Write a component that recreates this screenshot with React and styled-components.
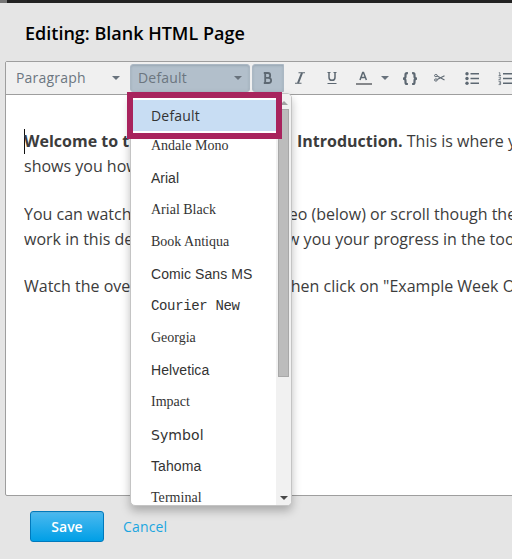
import React from 'react';
import styled, { createGlobalStyle, css } from 'styled-components';

const Global = createGlobalStyle`
  * { box-sizing: border-box; }
  body { margin: 0; background: #e5e5e5; font-family: "Open Sans", sans-serif; color: #3c3c3c; overflow: hidden; }
`;

const Page = styled.main`
  width: 512px;
  height: 559px;
  overflow: hidden;
  position: relative;
  display: flex;
  flex-direction: column;
`;

const TopBar = styled.div`
  height: 3px;
  flex: none;
  background: linear-gradient(90deg, #777 7px, #222 7px);
`;

const Title = styled.h1`
  margin: 0;
  height: 58px;
  flex: none;
  padding: 3px 0 0 25px;
  font-size: 18px;
  line-height: 54px;
  font-weight: 600;
  color: #000;
  white-space: nowrap;
`;

const Editor = styled.section`
  width: 530px;
  height: 435px;
  flex: none;
  margin-left: 5px;
  border: 1px solid #9e9e9e;
  border-radius: 2px;
  background: #fff;
`;

const Toolbar = styled.div`
  height: 33px;
  display: flex;
  padding-top: 2px;
  background: #f0f0f0;
  border-bottom: 1px solid #9e9e9e;
`;

const pressed = css`
  background: #b2bfcb;
  border-color: #abb8c4;
  box-shadow: inset 0 1px 2px rgba(70, 85, 100, 0.22);
`;

const Select = styled.button`
  width: ${(p) => p.$width}px;
  height: 28px;
  flex: none;
  display: flex;
  align-items: center;
  justify-content: space-between;
  border: 1px solid transparent;
  border-radius: 3px;
  padding: 0 ${(p) => p.$right}px 0 7px;
  margin-left: ${(p) => p.$left}px;
  background: none;
  color: #6c7680;
  font: 14px/26px "Open Sans", sans-serif;
  letter-spacing: ${(p) => p.$spacing || 0}px;
  ${(p) => p.$active && pressed}
`;

const Caret = styled.i`
  border: 4px solid transparent;
  border-top-color: #68727c;
  border-bottom: 0;
`;

const Tool = styled.button`
  width: ${(p) => p.$width}px;
  height: 28px;
  flex: none;
  display: flex;
  align-items: center;
  justify-content: center;
  gap: 9px;
  padding: 0;
  margin-left: ${(p) => p.$left || 0}px;
  border: 1px solid transparent;
  border-radius: 3px 0 0 3px;
  background: none;
  color: #5d6872;
  ${(p) => p.$active && pressed}
`;

const Content = styled.article`
  padding: 34px 0 0 18px;
  font-size: 16px;
  line-height: 25px;
  white-space: nowrap;
`;

const Paragraph = styled.div`
  margin-bottom: ${(p) => p.$gap}px;
`;

const Line = styled.div`
  display: flex;
`;

const Lead = styled.span`
  flex: none;
  width: ${(p) => p.$width}px;
  overflow: hidden;
  box-shadow: ${(p) => (p.$cursor ? 'inset 1px 0 #111' : 'none')};
`;

const Actions = styled.footer`
  display: flex;
  align-items: center;
  padding: 15px 0 0 30px;
`;

const Save = styled.button`
  width: 74px;
  height: 31px;
  border: 1px solid #0079bc;
  border-radius: 3px;
  background: linear-gradient(#4cb9ef, #009fe6);
  box-shadow: inset 0 1px 0 #52b1e0;
  color: #fff;
  font: 600 14px/27px "Open Sans", sans-serif;
  padding: 0;
`;

const Cancel = styled.a`
  margin-left: 19px;
  color: #1ba5e0;
  font-size: 14px;
  line-height: 28px;
  letter-spacing: 0.15px;
`;

const Menu = styled.div`
  position: absolute;
  left: 130px;
  top: 93px;
  width: 162px;
  height: 413px;
  display: flex;
  background: #fff;
  border: 1px solid #c4c4c4;
  border-radius: 5px;
  box-shadow: 0 5px 10px rgba(0, 0, 0, 0.26);
  overflow: hidden;
`;

const Options = styled.div`
  width: 145px;
  flex: none;
  padding-top: 6px;
`;

const Option = styled.div`
  height: 32px;
  padding-left: 20px;
  margin-top: ${(p) => p.$before || 0}px;
  color: #333;
  font-family: ${(p) => p.$font};
  font-size: ${(p) => p.$size || 14}px;
  line-height: ${(p) => p.$leading || 32}px;
  white-space: nowrap;
  letter-spacing: ${(p) => p.$spacing || 0}px;
  background: ${(p) => (p.$selected ? '#c8ddf3' : 'none')};
`;

const Scrollbar = styled.div`
  width: 15px;
  display: flex;
  flex-direction: column;
  align-items: center;
  justify-content: space-between;
  background: #f1f1f1;
`;

const Thumb = styled.div`
  width: 11px;
  height: 268px;
  flex: none;
  background: #bcbcbc;
  border: 1px solid #a8a8a8;
`;

const ScrollArrow = styled.i`
  border: 4px solid transparent;
  border-${(p) => (p.$up ? 'bottom' : 'top')}-color: ${(p) => (p.$up ? '#a2a2a2' : '#484848')};
  border-${(p) => (p.$up ? 'top' : 'bottom')}: 0;
  margin: ${(p) => (p.$up ? '7px 0 4px' : 'auto 0 5px')};
`;

const Callout = styled.div`
  position: absolute;
  left: 127px;
  top: 92px;
  width: 155px;
  height: 47px;
  border: 6px solid #a8235d;
  box-shadow: inset 0 2px 0 #fff, inset 0 -2px 0 #fff;
`;

const Glyph = styled.svg`
  display: block;
  flex: none;
  overflow: visible;
`;

const serif = '"Liberation Serif", serif';
const sans = '"Liberation Sans", sans-serif';
const fonts = [
  { name: 'Andale Mono', font: serif, before: -2 },
  { name: 'Arial', font: sans },
  { name: 'Arial Black', font: serif },
  { name: 'Book Antiqua', font: serif },
  { name: 'Comic Sans MS', font: sans, spacing: 0.08 },
  { name: 'Courier New', font: '"Liberation Mono", monospace', spacing: -0.35 },
  { name: 'Georgia', font: serif },
  { name: 'Helvetica', font: sans, spacing: 0.08 },
  { name: 'Impact', font: serif },
  { name: 'Symbol', font: '"DejaVu Sans", sans-serif', leading: 34, spacing: 0.1 },
  { name: 'Tahoma', font: sans, spacing: 0.1 },
  { name: 'Terminal', font: serif, spacing: 0.05 },
];

const BoldIcon = () => (
  <Glyph width="10" height="12" viewBox="0 0 10 12" fill="none" stroke="currentColor">
    <path d="M2.2 1v10H5.5C9 11 9 6 5.5 5.8H2.2M2.2 1H5C7.9 1 7.9 5.8 5 5.8M.8 1h2M.8 11h2" strokeWidth="1.8" />
  </Glyph>
);
const ItalicIcon = () => (
  <Glyph width="10" height="12" viewBox="0 0 10 12" fill="none" stroke="currentColor">
    <path d="M3.5.7H10M0 11.3h6.5" strokeWidth="1.1" />
    <path d="M7 .8 3 11.2" strokeWidth="2" />
  </Glyph>
);
const UnderlineIcon = () => (
  <Glyph width="10" height="12" viewBox="0 0 10 12" fill="none" stroke="currentColor">
    <path d="M2 .5v4.700C2 9.400 8 9.400 8 5.200V.5" strokeWidth="1.500" />
    <path d="M.5.500h3M6.500.500h3M.500 11.500h9" strokeWidth="1" />
  </Glyph>
);
const ColorIcon = () => (
  <Glyph width="16" height="14" viewBox="0 0 16 14" fill="none" stroke="currentColor">
    <path d="m4 9 2.700-7.500h.8L10.400 9M4.900 6.500h4.700" strokeWidth="1.500" />
    <path d="M0 13h16" stroke="#85878a" strokeWidth="2" />
  </Glyph>
);
const BracesIcon = () => (
  <Glyph width="16" height="13" viewBox="0 0 16 13" fill="none" stroke="currentColor" strokeWidth="2.200">
    <path d="M5.900 1.200H5Q3.500 1.200 3.500 2.900V4.500Q3.500 6.600 1 6.600 3.500 6.600 3.500 8.700v1.500Q3.500 12 5 12h.9M10.100 1.200h.9Q12.500 1.200 12.500 2.900V4.500q0 2.100 2.500 2.100-2.500 0-2.500 2.100v1.500Q12.500 12 11 12h-.9" />
  </Glyph>
);
const ScissorsIcon = () => (
  <Glyph width="11" height="8" viewBox="0 0 11 8" fill="none" stroke="currentColor">
    <ellipse cx="1.900" cy="1.600" rx="1.400" ry="1.100" />
    <ellipse cx="1.900" cy="6" rx="1.400" ry="1.100" />
    <path d="m3.200 2.100 7.300 3.800M3.200 5.500l7.300-3.800" strokeWidth="1.100" />
  </Glyph>
);
const BulletsIcon = () => (
  <Glyph width="14" height="13" viewBox="0 0 14 13" fill="currentColor">
    <circle cx="2" cy="1.800" r="1.700" /><circle cx="2" cy="6.500" r="1.700" /><circle cx="2" cy="11.200" r="1.700" />
    <path d="M5.500 1h8.500v1.500H5.500zM5.500 5.800h8.500v1.500H5.500zM5.500 10.500h8.500V12H5.500z" />
  </Glyph>
);
const NumbersIcon = () => (
  <Glyph width="14" height="13" viewBox="0 0 14 13" fill="none" stroke="currentColor" strokeWidth=".8">
    <path d="M.8.7h1v2.800M.6 3.500h2.400M.6 5.200h2v1.200l-2 1.400h2.300M.6 9.600h2v1.500H1M2.600 11.100v1.500h-2" />
    <path d="M5 1.700h9M5 6.500h9M5 11.300h9" strokeWidth="1.500" />
  </Glyph>
);

export default function App() {
  return (
    <Page>
      <Global />
      <TopBar />
      <Title>Editing: Blank HTML Page</Title>
      <Editor>
        <Toolbar>
          <Select $width={120} $left={2} $right={7} $spacing={0.2}>Paragraph<Caret /></Select>
          <Select $width={120} $left={2} $right={7} $spacing={0.2} $active>Default<Caret /></Select>
          <Tool $width={32} $left={2} $active aria-label="Bold"><BoldIcon /></Tool>
          <Tool $width={32} aria-label="Italic"><ItalicIcon /></Tool>
          <Tool $width={32} aria-label="Underline"><UnderlineIcon /></Tool>
          <Tool $width={43} $left={3} aria-label="Text color"><ColorIcon /><Caret /></Tool>
          <Tool $width={32} aria-label="Source code"><BracesIcon /></Tool>
          <Tool $width={26} aria-label="Cut"><ScissorsIcon /></Tool>
          <Tool $width={34} $left={3} aria-label="Bulleted list"><BulletsIcon /></Tool>
          <Tool $width={32} aria-label="Numbered list"><NumbersIcon /></Tool>
        </Toolbar>
        <Content>
          <Paragraph $gap={23}>
            <Line><Lead $width={273} $cursor><b>Welcome to the</b></Lead><span><b>Introduction.</b> This is where you</span></Line>
            <Line>shows you how</Line>
          </Paragraph>
          <Paragraph $gap={22}>
            <Line><Lead $width={243}>You can watch</Lead><span>video (below) or scroll though the</span></Line>
            <Line><Lead $width={236}>work in this demo</Lead><span>show you your progress in the tool</span></Line>
          </Paragraph>
          <Paragraph $gap={0}>
            <Line><Lead $width={261}>Watch the overview</Lead><span>then click on "Example Week One</span></Line>
          </Paragraph>
        </Content>
      </Editor>
      <Actions><Save>Save</Save><Cancel>Cancel</Cancel></Actions>
      <Menu>
        <Options>
          <Option $font={'"Open Sans", sans-serif'} $spacing={0.2} $selected>Default</Option>
          {fonts.map((f) => (
            <Option key={f.name} $font={f.font} $before={f.before} $spacing={f.spacing} $leading={f.leading}>{f.name}</Option>
          ))}
        </Options>
        <Scrollbar><ScrollArrow $up /><Thumb /><ScrollArrow /></Scrollbar>
      </Menu>
      <Callout />
    </Page>
  );
}
